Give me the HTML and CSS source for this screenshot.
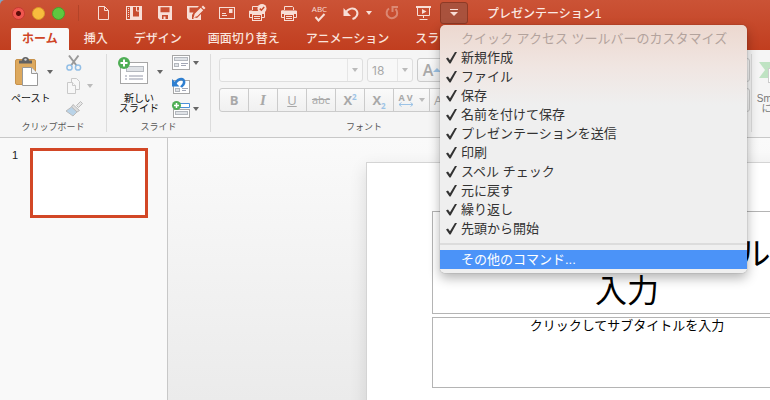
FILE: index.html
```
<!DOCTYPE html>
<html lang="ja">
<head>
    <meta charset="UTF-8">
    <meta name="viewport" content="width=device-width, initial-scale=1.0">
    <title>プレゼンテーション1</title>
    <link rel="stylesheet" href="styles.css">
</head>
<body>
<div class="window">
    <header class="titlebar">
        <div class="lights">
            <button class="light close" aria-label="閉じる"></button>
            <button class="light minimize" aria-label="しまう"></button>
            <button class="light expand" aria-label="拡大"></button>
        </div>
        <div class="quick-access">
            <button class="qa" aria-label="新規作成">
                <svg width="18" height="18" viewBox="0 0 18 18"><path d="M4.500 2.500h6l4 4v9h-10z M10.500 2.500v4h4" class="line"/></svg>
            </button>
            <button class="qa" aria-label="ファイル">
                <svg width="18" height="18" viewBox="0 0 18 18"><rect x="1.500" y="2.500" width="15" height="13" class="line"/><path d="M5 2h3v14H5z" class="solid"/><path d="M3.500 4v9" class="line" stroke-dasharray="1 1"/><path d="M8 12.500h8V16H8z M14 2h2v12h-2z" class="solid"/><path d="M11.500 3v4h3.500" class="line"/></svg>
            </button>
            <button class="qa" aria-label="保存">
                <svg width="18" height="18" viewBox="0 0 18 18"><path d="M2 2h14v14H4l-2-2z M4.500 3.300v5h9v-5z M6 11v4h1.500v-2.500h2V15H12v-4z" class="solid" fill-rule="evenodd"/></svg>
            </button>
            <button class="qa" aria-label="名前を付けて保存">
                <svg width="20" height="18" viewBox="0 0 20 18"><path d="M1 2h12l-1.500 1.500H3.500v5h4L6 11v4h1.500v-2l3.500 1 4-4v6H3l-2-2z" class="solid"/><path d="M17 1.500l2.500 2.500-1.500 1.500L15.500 3z M14.700 3.800l2.500 2.500-6 6-3.500 1 1-3.500z" class="solid"/></svg>
            </button>
            <button class="qa" aria-label="プレゼンテーションを送信">
                <svg width="18" height="18" viewBox="0 0 18 18"><rect x="1.500" y="3.500" width="15" height="11" class="line"/><path d="M11 5h3.500v4H11z" class="solid"/><path d="M4 9.500h4 M4 11.500h5" class="line"/></svg>
            </button>
            <button class="qa" aria-label="印刷プレビュー">
                <svg width="19" height="18" viewBox="0 0 19 18"><path d="M4.500 6V2.500H10 M4.500 7H1.500v6.500h2.500 M13 13.500h3.500V8" class="line"/><path d="M1.500 7h15v3h-15z" class="solid"/><rect x="4.500" y="10.500" width="9" height="6" class="line"/><path d="M6 12.500h6 M6 14.500h6" class="line"/><circle cx="14" cy="4.500" r="4.500" class="solid"/><path d="M11.800 4.600l1.600 1.600 2.800-3.200" class="tick"/></svg>
            </button>
            <button class="qa" aria-label="印刷">
                <svg width="18" height="18" viewBox="0 0 18 18"><path d="M4.500 6V2.500h8l1 1V6 M4.500 7H1.500v6.500h3 M13 13.500h3.500V7" class="line"/><path d="M1.500 6.500h15V10h-15z" class="solid"/><rect x="4.500" y="10.500" width="9" height="6" class="line"/><path d="M6 12.500h6 M6 14.500h6" class="line"/></svg>
            </button>
            <button class="qa spell" aria-label="スペル チェック">
                <span>ABC</span>
                <svg width="12" height="9" viewBox="0 0 12 9"><path d="M1.500 4l3 3.500 6-6.500" class="line thick"/></svg>
            </button>
            <button class="qa" aria-label="元に戻す">
                <svg width="18" height="18" viewBox="0 0 18 18"><path d="M3 9.500C6 4 12 3 14.500 6.500S14 14 10.500 15" class="line thick"/><path d="M1.500 4v8H9z" class="solid"/></svg>
            </button>
            <button class="qa-caret" aria-label="元に戻す履歴"><i class="caret light-caret"></i></button>
            <button class="qa faded" aria-label="繰り返し">
                <svg width="18" height="18" viewBox="0 0 18 18"><path d="M6 4.500A5.300 5.300 0 1 0 12.500 5" class="line thick"/><path d="M9.500 8V3H15" class="line thick"/></svg>
            </button>
            <button class="qa" aria-label="先頭から開始">
                <svg width="18" height="18" viewBox="0 0 18 18"><path d="M2 3h15" class="line thick"/><path d="M3.500 3v8.500h12V3 M9.500 12v2 M5.500 15.500h8" class="line"/><path d="M8 5l4.500 2.500L8 10z" class="solid"/></svg>
            </button>
            <div class="customize">
                <button class="customize-button" aria-label="クイック アクセス ツールバーのカスタマイズ" aria-expanded="true">
                    <svg width="12" height="12" viewBox="0 0 12 12"><path d="M2 2.500h8" class="line"/><path d="M2 5h8l-4 4z" class="solid"/></svg>
                </button>
                <div class="menu" role="menu">
                    <div class="menu-title">クイック アクセス ツールバーのカスタマイズ</div>
                    <button class="menu-item checked" role="menuitemcheckbox" aria-checked="true">新規作成</button>
                    <button class="menu-item checked" role="menuitemcheckbox" aria-checked="true">ファイル</button>
                    <button class="menu-item checked" role="menuitemcheckbox" aria-checked="true">保存</button>
                    <button class="menu-item checked" role="menuitemcheckbox" aria-checked="true">名前を付けて保存</button>
                    <button class="menu-item checked" role="menuitemcheckbox" aria-checked="true">プレゼンテーションを送信</button>
                    <button class="menu-item checked" role="menuitemcheckbox" aria-checked="true">印刷</button>
                    <button class="menu-item checked" role="menuitemcheckbox" aria-checked="true">スペル チェック</button>
                    <button class="menu-item checked" role="menuitemcheckbox" aria-checked="true">元に戻す</button>
                    <button class="menu-item checked" role="menuitemcheckbox" aria-checked="true">繰り返し</button>
                    <button class="menu-item checked" role="menuitemcheckbox" aria-checked="true">先頭から開始</button>
                    <hr class="menu-line">
                    <button class="menu-item selected" role="menuitem">その他のコマンド...</button>
                </div>
            </div>
        </div>
        <h1 class="doc-title">プレゼンテーション1</h1>
    </header>

    <nav class="tabs">
        <button class="tab active">ホーム</button>
        <button class="tab">挿入</button>
        <button class="tab">デザイン</button>
        <button class="tab">画面切り替え</button>
        <button class="tab">アニメーション</button>
        <button class="tab">スライド ショー</button>
    </nav>

    <div class="ribbon">
        <section class="group clipboard">
            <div class="group-body">
                <button class="big">
                    <span class="big-icon">
                        <svg width="26" height="32" viewBox="0 0 26 32"><rect x="1.500" y="3.500" width="20" height="25" rx="1.500" fill="#dda95e" stroke="#c8924a"/><path d="M5 7.500V4.500h3a3.500 3.500 0 0 1 7 0h3v3z" fill="#626262"/><circle cx="11.500" cy="3.600" r="1.200" fill="#d8d8d8"/><path d="M8.500 11.500h9l6 6v12h-15z" fill="#fff" stroke="#999"/><path d="M17.500 11.500v6h6" fill="#f3f3f3" stroke="#999"/></svg>
                        <i class="caret"></i>
                    </span>
                    <span class="big-label">ペースト</span>
                </button>
                <div class="small-icons">
                    <button class="small" aria-label="切り取り">
                        <svg width="18" height="18" viewBox="0 0 18 18"><path d="M4 1.500l7.500 10 M13.500 1.500L6 11.500" stroke="#9a9a9a" stroke-width="2" fill="none"/><circle cx="4.500" cy="13.500" r="2.600" class="blue-ring"/><circle cx="13" cy="13.500" r="2.600" class="blue-ring"/></svg>
                    </button>
                    <button class="small" aria-label="コピー">
                        <svg width="18" height="18" viewBox="0 0 18 18" fill="#f7f7f7" stroke="#c9c9c9"><path d="M6.500 1.500h5l3 3v8h-8z"/><path d="M2.500 5.500h5l3 3v8h-8z"/><path d="M7.500 5.500v3h3"/></svg>
                        <i class="caret pale"></i>
                    </button>
                    <button class="small" aria-label="書式のコピー">
                        <svg width="18" height="18" viewBox="0 0 18 18"><path d="M15.500 1.500l2 2-4 4-2-2z" fill="#e6e6e6" stroke="#bbb"/><path d="M8 4.500l6.500 6-2.500 1.500-5.500-5z" fill="#ddd" stroke="#bbb"/><path d="M6.500 7l5.500 5-4 4-7-5z" fill="#b9d3e8" stroke="#bbb"/></svg>
                    </button>
                </div>
            </div>
            <h2 class="group-label">クリップボード</h2>
        </section>

        <section class="group slides">
            <div class="group-body">
                <button class="big">
                    <span class="big-icon">
                        <svg width="32" height="32" viewBox="0 0 32 32"><rect x="2.500" y="6.500" width="27" height="21" fill="#fff" stroke="#a6a6a6"/><rect x="8.500" y="10.500" width="17" height="5" fill="#dfe2e6" stroke="#b4b8be"/><path d="M7 20h2 M11 20h14 M7 23h2 M11 23h14" stroke="#9397a8"/><circle cx="6" cy="7" r="6" fill="#4fae55"/><path d="M6 3.500v7 M2.500 7h7" stroke="#fff" stroke-width="2"/></svg>
                        <i class="caret"></i>
                    </span>
                    <span class="big-label">新しい<br>スライド</span>
                </button>
                <div class="small-icons">
                    <button class="small" aria-label="レイアウト">
                        <svg width="20" height="18" viewBox="0 0 20 18"><rect x="1.500" y="1.500" width="17" height="14" class="page"/><rect x="3.500" y="3.500" width="13" height="3" class="block"/><rect x="3.500" y="9.500" width="4" height="3" class="block"/><path d="M10 9.500h7 M10 11.500h5" class="rule"/></svg>
                        <i class="caret"></i>
                    </button>
                    <button class="small" aria-label="リセット">
                        <svg width="20" height="18" viewBox="0 0 20 18"><rect x="2.500" y="3.500" width="16" height="13" class="page"/><rect x="4.500" y="11.500" width="4" height="3" class="block"/><path d="M11 11.500h6 M11 13.500h4" class="rule"/><path d="M4 7C6 2 12 .500 13 4S11.500 8 10 10" fill="none" stroke="#2f7fd0" stroke-width="2.500"/><path d="M1 2v7.500h7.500z" fill="#2f7fd0"/></svg>
                    </button>
                    <button class="small" aria-label="セクション">
                        <svg width="20" height="18" viewBox="0 0 20 18"><rect x="2.500" y="9.500" width="16" height="8" class="page"/><rect x="4.500" y="11.500" width="12" height="3" class="block"/><path d="M9 3.500h9.500v4H9" fill="#fff" stroke="#4a90d9"/><circle cx="5.500" cy="5.500" r="4.500" fill="#4fae55"/><path d="M5.500 3v5 M3 5.500h5" stroke="#fff" stroke-width="1.500"/></svg>
                        <i class="caret"></i>
                    </button>
                </div>
            </div>
            <h2 class="group-label">スライド</h2>
        </section>

        <section class="group font">
            <div class="rows">
                <div class="row">
                    <span class="select family"><select aria-label="フォント" disabled><option></option></select><i class="caret pale"></i></span>
                    <span class="select size"><select aria-label="フォント サイズ" disabled><option>18</option></select><i class="caret pale"></i></span>
                    <span class="buttons">
                        <button class="fmt grow" disabled>A<svg width="8" height="6" viewBox="0 0 8 6"><path d="M0 5l4-4 4 4z" fill="#9cc3e6"/></svg></button>
                        <button class="fmt shrink" disabled aria-label="フォント サイズの縮小"></button>
                    </span>
                </div>
                <div class="row">
                    <span class="buttons">
                        <button class="fmt" disabled><b>B</b></button>
                        <button class="fmt italic" disabled><i>I</i></button>
                        <button class="fmt" disabled><u>U</u></button>
                        <button class="fmt strike" disabled><s>abc</s></button>
                        <button class="fmt super" disabled><b>X<sup>2</sup></b></button>
                        <button class="fmt sub" disabled><b>X<sub>2</sub></b></button>
                        <button class="fmt spacing" disabled>
                            <span class="av">AV<svg width="16" height="5" viewBox="0 0 16 5"><path d="M1 2.500h14 M3.500 .5l-2.500 2 2.500 2 M12.500 .5l2.500 2-2.500 2" fill="none" stroke="#9cc3e6"/></svg></span>
                            <i class="caret pale"></i>
                        </button>
                        <button class="fmt case" disabled>A</button>
                    </span>
                </div>
            </div>
            <h2 class="group-label">フォント</h2>
        </section>

        <section class="group paragraph">
            <div class="rows">
                <div class="row"><span class="buttons wide"><button class="fmt" disabled aria-label="箇条書き"></button></span></div>
                <div class="row"><span class="buttons wide"><button class="fmt" disabled aria-label="配置"></button></span></div>
            </div>
        </section>

        <section class="group smartart">
            <button class="big" disabled>
                <span class="big-icon">
                    <svg width="38" height="32" viewBox="0 0 38 32"><path d="M0 6h20l8 8-8 8H0l6-8z" fill="#bfe3c3"/><rect x="9.500" y="12.500" width="24" height="14" fill="#fff" stroke="#ccc"/></svg>
                </span>
                <span class="big-label">SmartArt<br>に変換</span>
            </button>
        </section>
    </div>

    <main class="workspace">
        <aside class="thumbnails">
            <span class="thumb-number">1</span>
            <button class="thumb" aria-label="スライド 1"></button>
        </aside>
        <div class="canvas">
            <article class="slide">
                <div class="placeholder title-box"><p>クリックしてタイトルを入力</p></div>
                <div class="placeholder subtitle-box"><p>クリックしてサブタイトルを入力</p></div>
            </article>
        </div>
    </main>
</div>
</body>
</html>
```
FILE: styles.css
```
* {
    box-sizing: border-box;
}
body {
    margin: 0;
    background: #7fa6c4;
    font-family: "Liberation Sans", "Noto Sans CJK JP", sans-serif;
    font-size: 12px;
    color: #222;
}
button {
    font: inherit;
    color: inherit;
    background: none;
    border: 0;
    padding: 0;
    margin: 0;
}
h1, h2, p {
    margin: 0;
    font-weight: normal;
}
svg {
    display: block;
    flex: none;
}
.window {
    display: flex;
    flex-direction: column;
    height: 100vh;
    overflow: hidden;
    border-radius: 5px 0 0 0;
    background: linear-gradient(#cb5336, #c13e1f 50px, #f5f5f5 50px);
}

/* title bar */
.titlebar {
    display: flex;
    flex: none;
    height: 28px;
    color: #f8ded6;
}
.lights {
    display: flex;
    gap: 7px;
    width: 79px;
    height: 16px;
    margin: 5px 8px 0 0;
    padding: 2px 0 0 12px;
    border-right: 1px solid #b34328;
}
.light {
    width: 13px;
    height: 13px;
    border-radius: 50%;
}
.close {
    background: radial-gradient(circle, #5c0d0a 2px, #f0564f 3px);
    border: 1px solid #c53a32;
}
.minimize {
    background: #f8bc3d;
    border: 1px solid #d99a2b;
}
.expand {
    background: #5ec73f;
    border: 1px solid #45a12c;
}
.quick-access {
    display: flex;
}
.qa {
    display: flex;
    align-items: center;
    justify-content: center;
    width: 31px;
    height: 26px;
}
.qa-caret {
    display: flex;
    align-items: center;
    width: 10px;
    height: 26px;
}
.faded {
    opacity: 0.4;
}
.line {
    fill: none;
    stroke: #f8ded6;
}
.thick {
    stroke-width: 2;
}
.solid {
    fill: #f8ded6;
}
.tick {
    fill: none;
    stroke: #c84a2c;
    stroke-width: 1.5;
}
.spell {
    flex-direction: column;
    font-family: "Open Sans", sans-serif;
    font-size: 8px;
    line-height: 8px;
}
.doc-title {
    padding-left: 19px;
    font-size: 12px;
    font-weight: 500;
    line-height: 29px;
    color: #fbe9e3;
}
.caret {
    flex: none;
    border: 3px solid transparent;
    border-top: 4px solid #666;
    border-bottom: 0;
}
.light-caret {
    border-top-color: #f8ded6;
}
.pale {
    border-top-color: #bbb;
}

/* customize menu */
.customize {
    position: relative;
    margin: 2px 0 0 2px;
}
.customize-button {
    display: flex;
    align-items: center;
    justify-content: center;
    width: 28px;
    height: 22px;
    background: #a9523d;
    border: 1px solid #8e3a25;
    border-radius: 3px;
}
.menu {
    position: absolute;
    z-index: 10;
    top: 23px;
    left: 0;
    width: 307px;
    padding: 4px 0;
    border-radius: 5px;
    background: linear-gradient(#ecd8cf, #f0e5e1 40px, #efefef 80px);
    box-shadow: 0 5px 12px rgba(0, 0, 0, 0.3), 0 0 1px rgba(0, 0, 0, 0.5);
    font-size: 13px;
    line-height: 19px;
    color: #333;
}
.menu-title {
    padding-left: 21px;
    white-space: nowrap;
    color: #b3a39d;
}
.menu-item {
    display: flex;
    align-items: center;
    width: 100%;
    height: 19px;
    padding-left: 21px;
}
.checked {
    padding-left: 6px;
}
.checked::before {
    content: "";
    width: 11px;
    height: 12px;
    margin-right: 4px;
    background: #333;
    clip-path: polygon(0 58%, 18% 50%, 36% 72%, 84% 0, 100% 4%, 42% 100%, 32% 100%);
}
.selected {
    background: #4b93f8;
    color: #fff;
}
.menu-line {
    height: 2px;
    margin: 5px 0;
    border: 0;
    background: #dcdcdc;
}

/* tabs */
.tabs {
    display: flex;
    flex: none;
    height: 22px;
    padding-left: 9px;
    color: #fae3dc;
}
.tab {
    padding: 0 13px;
    font-weight: 500;
    line-height: 21px;
    white-space: nowrap;
}
.active {
    margin: 0 2px;
    padding: 0 11px;
    border-radius: 2px 2px 0 0;
    background: #f9f9f9;
    color: #cf4526;
    font-weight: bold;
}

/* ribbon */
.ribbon {
    display: flex;
    flex: none;
    height: 88px;
    overflow: hidden;
    background: #f5f5f5;
    border-bottom: 1px solid #c8c8c8;
}
.group {
    display: flex;
    flex: none;
    flex-direction: column;
    justify-content: space-between;
    height: 78px;
    margin-top: 4px;
    border-right: 1px solid #dcdcdc;
}
.group-body {
    display: flex;
}
.group-label {
    font-size: 9px;
    line-height: 10px;
    text-align: center;
    color: #555;
}
.clipboard {
    width: 107px;
    padding-left: 11px;
}
.clipboard .group-label {
    margin-left: -11px;
}
.slides {
    width: 104px;
    padding-left: 11px;
}
.slides .group-label {
    margin-left: -11px;
}
.big {
    display: flex;
    flex-direction: column;
    align-items: flex-start;
}
.big-icon {
    display: flex;
    align-items: center;
    gap: 7px;
    height: 36px;
    padding: 0 0 0 3px;
}
.slides .big-icon {
    padding-left: 0;
}
.big-label {
    padding-top: 4px;
    font-size: 10px;
    line-height: 10px;
    color: #111;
    text-align: center;
}
.slides .big-label {
    padding-left: 1px;
}
.small-icons {
    display: flex;
    flex-direction: column;
    gap: 5px;
    margin-left: 8px;
}
.clipboard .small-icons {
    margin-left: 12px;
}
.small {
    display: flex;
    align-items: center;
    gap: 2px;
    height: 18px;
}
.clipboard .small {
    gap: 4px;
}
.blue-ring {
    fill: none;
    stroke: #93bfe6;
    stroke-width: 1.5;
}
.page {
    fill: #fff;
    stroke: #a6a6a6;
}
.block {
    fill: #dfe2e6;
    stroke: #b4b8be;
}
.rule {
    stroke: #a3a7b5;
}
.font {
    width: 307px;
    padding: 4px 8px 0;
}
.paragraph {
    width: 234px;
    padding: 4px 1px 0 10px;
}
.rows {
    display: flex;
    flex-direction: column;
    gap: 6px;
}
.row {
    display: flex;
    gap: 4px;
}
.select {
    display: flex;
    align-items: center;
    height: 24px;
    padding-right: 4px;
    border: 1px solid #dedede;
    border-radius: 3px;
    background: #f8f8f8;
}
.select select {
    flex: 1;
    min-width: 0;
    height: 22px;
    margin-right: 4px;
    padding: 0 4px;
    border: 0;
    border-right: 1px solid #e6e6e6;
    background: none;
    appearance: none;
    font: 12px Inter, sans-serif;
    color: #a8a8a8;
    opacity: 1;
}
.family {
    width: 144px;
}
.size {
    width: 46px;
}
.buttons {
    display: flex;
    height: 24px;
    border: 1px solid #cbcbcb;
    border-radius: 3px;
    background: linear-gradient(#fafafa, #f0f0f0);
}
.wide {
    flex: 1;
}
.fmt {
    display: flex;
    align-items: center;
    justify-content: center;
    width: 29px;
    border-right: 1px solid #cbcbcb;
    font-family: "Open Sans", sans-serif;
    font-size: 13px;
    line-height: 20px;
    color: #a8a8a8;
}
.fmt:last-child {
    border-right: 0;
}
.italic {
    font-family: "Liberation Serif", serif;
    font-size: 15px;
    font-weight: bold;
}
.strike {
    font-size: 11px;
}
.fmt sup, .fmt sub {
    font-size: 8px;
    line-height: 8px;
    color: #9cc3e6;
}
.grow {
    font-size: 16px;
    font-weight: 600;
}
.spacing {
    gap: 4px;
    width: 36px;
}
.av {
    font-size: 9px;
    font-weight: bold;
    line-height: 9px;
    letter-spacing: 2px;
}
.case {
    justify-content: flex-start;
    padding-left: 4px;
}
.smartart {
    padding-left: 4px;
    border: 0;
}
.smartart .big {
    align-items: center;
}
.smartart .big-label {
    color: #777;
}

/* slides */
.workspace {
    display: flex;
    flex: 1;
    min-height: 0;
}
.thumbnails {
    display: flex;
    flex: none;
    align-items: flex-start;
    width: 168px;
    padding: 10px 0 0 12px;
    background: #f9f9f9;
    border-right: 1px solid #c8c8c8;
}
.thumb-number {
    width: 18px;
    font-size: 11px;
    line-height: 14px;
}
.thumb {
    width: 118px;
    height: 70px;
    background: #fff;
    border: 3px solid #d24726;
}
.canvas {
    flex: 1;
    min-width: 0;
    overflow: hidden;
    padding: 24px 0 0 198px;
    background: linear-gradient(#fafafa, #ebebeb);
}
.slide {
    width: 522px;
    height: 294px;
    padding: 48px 65px;
    background: #fff;
    border: 1px solid #d4d4d4;
    box-shadow: 0 6px 16px rgba(0, 0, 0, 0.12);
    color: #000;
    text-align: center;
    font-family: "Noto Sans CJK JP", sans-serif;
}
.placeholder {
    border: 1px solid #b4b4b4;
}
.title-box {
    display: flex;
    align-items: flex-end;
    justify-content: center;
    height: 103px;
    margin-bottom: 3px;
    padding: 0 8px 6px;
    font-size: 32px;
    font-weight: 300;
    line-height: 37px;
}
.subtitle-box {
    height: 71px;
    font-size: 13px;
    line-height: 14px;
}
```
